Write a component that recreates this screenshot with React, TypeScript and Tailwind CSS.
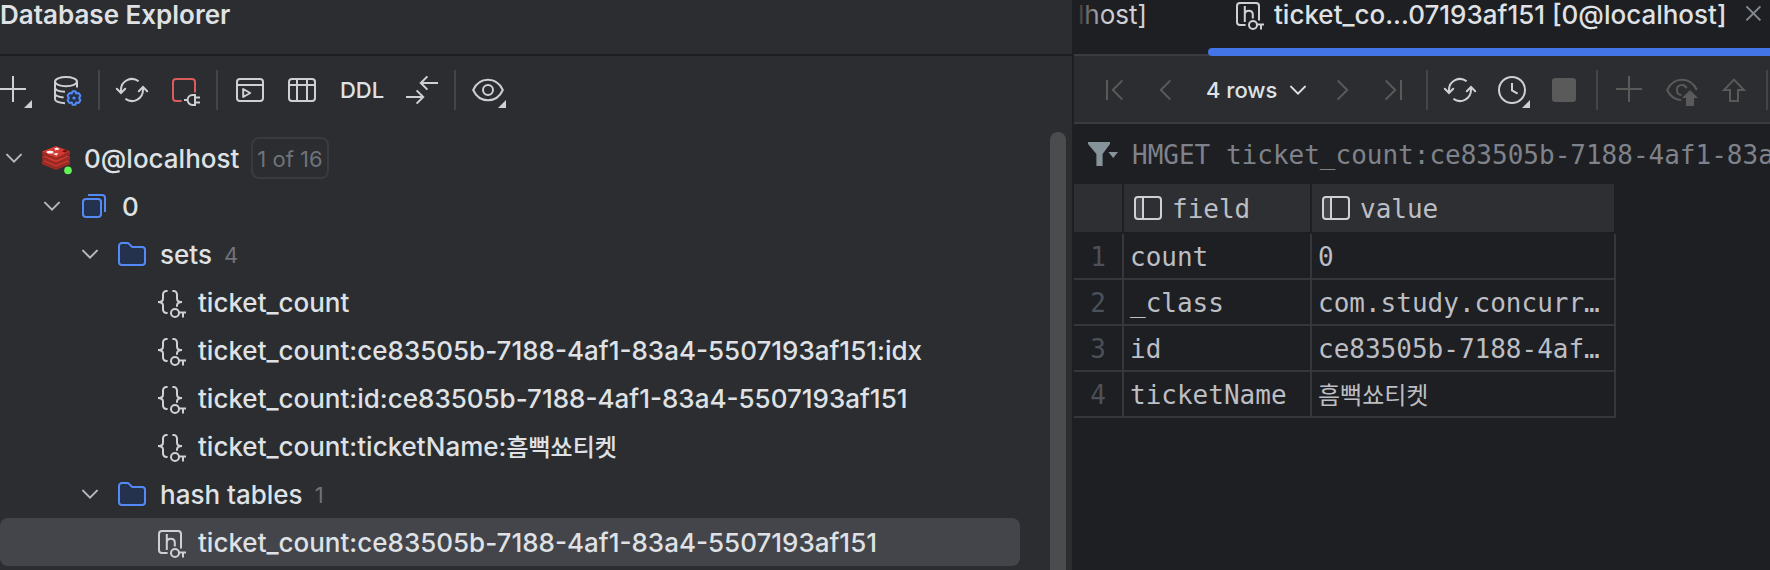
import type { ReactNode } from "react";

const UI_FONT = "font-['Inter','Noto_Sans_CJK_KR',sans-serif]";
const MONO_FONT = "font-['DejaVu_Sans_Mono','Noto_Sans_CJK_KR',monospace]";

function Icon({ children, className = "" }: { children: ReactNode; className?: string }) {
  return (
    <svg
      viewBox="0 0 16 16"
      fill="none"
      stroke="currentColor"
      aria-hidden="true"
      className={`size-8 shrink-0 overflow-visible ${className}`}
    >
      {children}
    </svg>
  );
}

const Corner = () => <path d="M17 13v4h-4z" fill="currentColor" stroke="none" />;

const PlusIcon = ({ menu = false }: { menu?: boolean }) => (
  <Icon>
    <path d="M7.5 1v13M1 7.5h13" />
    {menu && <Corner />}
  </Icon>
);

const DataSourceIcon = () => (
  <Icon>
    <ellipse cx="8" cy="3.8" rx="5.5" ry="2.3" />
    <path d="M2.5 3.8v8.7c0 1 1.8 1.9 5 2.1M2.5 6.7c0 1.1 1.8 2 5 2.2M2.5 9.6c0 1.1 1.6 1.9 4.3 2.1M13.5 3.8v3" />
    <g stroke="#548af7">
      <path
        d="M11.3 8.6h1.4l.4 1.1 1.2-.2.9 1.3-.6 1.2.6 1.2-.9 1.3-1.2-.2-.4 1.1h-1.4l-.4-1.1-1.2.2-.9-1.3.6-1.2-.6-1.2.9-1.3 1.2.2z"
        fill="#25324d"
        strokeLinejoin="round"
      />
      <circle cx="12" cy="12" r="0.8" fill="#548af7" stroke="none" />
    </g>
  </Icon>
);

const RefreshIcon = () => (
  <Icon>
    <path d="M2.5 9.3V8a5.5 5.5 0 0 1 8.8-4.4M13.5 6.7V8a5.5 5.5 0 0 1-8.8 4.4" />
    <path d="M.4 7.4l2.1 2.1 2.1-2.1M11.4 8.6l2.1-2.1 2.1 2.1" strokeLinecap="round" />
  </Icon>
);

const DisconnectIcon = () => (
  <Icon>
    <path
      d="M6.8 13.5H4A1.5 1.5 0 0 1 2.5 12V4A1.5 1.5 0 0 1 4 2.5h8A1.5 1.5 0 0 1 13.5 4v5.2"
      stroke="#db5c5c"
    />
    <path d="M13.5 10.5h-1.2a2.5 2.5 0 0 0 0 5h1.2zM8 13h1.8M13.5 11.7H16M13.5 14.3H16" />
  </Icon>
);

const ConsoleIcon = () => (
  <Icon>
    <rect x="1.5" y="2.5" width="13" height="11" rx="1.5" />
    <path d="M1.5 5.5h13" />
    <path d="M4.6 7.5v4l3.5-2z" strokeLinejoin="round" />
  </Icon>
);

const GridIcon = () => (
  <Icon>
    <rect x="1.5" y="2.5" width="13" height="11" rx="1.5" />
    <path d="M1.5 5.5h13M5.5 2.5v11M10.5 2.5v11" />
  </Icon>
);

const CompareIcon = () => (
  <Icon>
    <path d="M16 4.5H7.4M10.7 1.2L7.4 4.5l3.3 3.3M0 11.5h8.6M5.3 8.2l3.3 3.3-3.3 3.3" />
  </Icon>
);

const EyeIcon = () => (
  <Icon>
    <path d="M.6 8C2 4.9 4.8 2.9 8 2.9S14 4.9 15.4 8C14 11.1 11.2 13.1 8 13.1S2 11.1.6 8z" />
    <circle cx="8" cy="8" r="2.5" />
    <Corner />
  </Icon>
);

const EyeUpIcon = () => (
  <Icon>
    <path d="M15.4 8C14 4.9 11.2 2.9 8 2.9S2 4.9.6 8c1.3 2.9 3.8 4.8 7 5.1" />
    <path d="M7.7 10.5A2.5 2.5 0 1 1 10.3 7.2" />
    <path d="M12 8l4 4h-2v4h-4v-4H8z" fill="currentColor" stroke="none" />
  </Icon>
);

const ClockIcon = () => (
  <Icon>
    <circle cx="8" cy="8" r="6.5" />
    <path d="M8 4.5V8.2l2.8 1.6" />
    <Corner />
  </Icon>
);

const StopIcon = () => (
  <Icon>
    <rect x="2" y="2" width="12" height="12" rx="1.5" fill="currentColor" stroke="none" />
  </Icon>
);

const UploadIcon = () => (
  <Icon>
    <path d="M8 2.8l5 5.2h-3v5.5H6V8H3z" />
  </Icon>
);

const FirstIcon = () => (
  <Icon>
    <path d="M4.5 3v10M12.2 3.2L7.4 8l4.8 4.8" />
  </Icon>
);
const PrevIcon = () => (
  <Icon>
    <path d="M10.2 3.2L5.4 8l4.8 4.8" />
  </Icon>
);
const NextIcon = () => (
  <Icon>
    <path d="M5.8 3.2L10.6 8l-4.8 4.8" />
  </Icon>
);
const LastIcon = () => (
  <Icon>
    <path d="M3.8 3.2L8.6 8l-4.8 4.8M11.5 3v10" />
  </Icon>
);

const ChevronDown = ({ className = "" }: { className?: string }) => (
  <svg
    viewBox="0 0 14 14"
    fill="none"
    stroke="currentColor"
    strokeLinecap="round"
    aria-hidden="true"
    className={`size-7 shrink-0 ${className}`}
  >
    <path d="M3.5 5.3L7 8.8l3.5-3.5" />
  </svg>
);

function RedisLayer({ y }: { y: number }) {
  return (
    <g transform={`translate(0 ${y})`} stroke="none">
      <path d="M1 4.8v1.6l7 2.9 7-2.9V4.8L8 7.7z" fill="#9b2a24" />
      <path d="M1 4.8L8 2l7 2.8-7 2.9z" fill="#d33a31" />
    </g>
  );
}

const RedisIcon = () => (
  <Icon>
    <RedisLayer y={4.7} />
    <RedisLayer y={2.35} />
    <RedisLayer y={0} />
    <g stroke="none" fill="#ffffff">
      <ellipse cx="5" cy="5.1" rx="1.7" ry="0.7" />
      <path d="M7 3l.9.1.4-.5.5.5h1l-.6.4.3.6-1.1-.2-.9.3.1-.6z" />
      <path d="M6.4 5.9l2.7-.4-.8 1.2z" />
    </g>
    <path d="M11 4.6l1.5-.7 1.4.7-1.5.6z" fill="#7a0c00" stroke="none" />
    <circle cx="14" cy="14.2" r="2.3" fill="#2b2d30" stroke="none" />
    <circle cx="14" cy="14.2" r="1.9" fill="#62f354" stroke="none" />
  </Icon>
);

const SchemaIcon = () => (
  <Icon className="text-[#548af7]">
    <rect x="2.5" y="4.5" width="9" height="9" rx="1.5" fill="#25324d" />
    <path d="M5 2.5h7A1.5 1.5 0 0 1 13.5 4v7" />
  </Icon>
);

const FolderIcon = () => (
  <Icon className="text-[#548af7]">
    <path
      d="M1.5 4A1.5 1.5 0 0 1 3 2.5h2.7a1 1 0 0 1 .7.3l1.7 1.7H13A1.5 1.5 0 0 1 14.5 6v6a1.5 1.5 0 0 1-1.5 1.5H3A1.5 1.5 0 0 1 1.5 12z"
      fill="#25324d"
    />
  </Icon>
);

const KeyGlyph = () => (
  <>
    <circle cx="10.5" cy="13.5" r="2" />
    <path d="M12.5 13.2H16M14.5 13.2v2.5" />
  </>
);

const SetIcon = () => (
  <Icon className="text-[#ced0d6]">
    <path d="M6.8 2.5H6.2A1.7 1.7 0 0 0 4.5 4.2v2C4.5 7.3 3.8 8 2 8c1.8 0 2.5.7 2.5 1.8v2a1.7 1.7 0 0 0 1.7 1.7h.6" />
    <path d="M9.2 2.5h.6a1.7 1.7 0 0 1 1.7 1.7v2C11.5 7.3 12.2 8 14 8c-1.8 0-2.5.7-2.5 1.8v.6" />
    <KeyGlyph />
  </Icon>
);

const HashIcon = () => (
  <Icon className="text-[#ced0d6]">
    <path d="M6.8 13.5H4A1.5 1.5 0 0 1 2.5 12V4A1.5 1.5 0 0 1 4 2.5h8A1.5 1.5 0 0 1 13.5 4v7.3" />
    <path d="M6.4 4v8M6.4 8.4c0-1.2.8-2 2-2s2 .8 2 2v1.8" />
    <KeyGlyph />
  </Icon>
);

const ColumnIcon = () => (
  <Icon className="text-[#ced0d6]">
    <rect x="2" y="3" width="3" height="10" fill="#43454a" stroke="none" />
    <rect x="1.5" y="2.5" width="13" height="11" rx="1.5" />
    <path d="M5.5 2.5v11" />
  </Icon>
);

function ToolButton({ label, disabled = false, children }: { label: string; disabled?: boolean; children: ReactNode }) {
  return (
    <button
      type="button"
      aria-label={label}
      disabled={disabled}
      className="flex shrink-0 items-center px-2.5 text-[#ced0d6] disabled:text-[#5a5a5a]"
    >
      {children}
    </button>
  );
}

const Separator = () => <div className="mx-1.5 h-10 w-0.5 shrink-0 bg-[#43454a]" />;

const Korean = ({ children }: { children: ReactNode }) => (
  <span className="font-['Noto_Sans_CJK_KR',sans-serif] text-2xl leading-none">{children}</span>
);

const indents = ["pl-0", "pl-[38px]", "pl-[76px]", "pl-[154px]"];

function TreeRow({
  level,
  icon,
  count,
  selected = false,
  children,
}: {
  level: number;
  icon: ReactNode;
  count?: ReactNode;
  selected?: boolean;
  children: ReactNode;
}) {
  return (
    <li
      role="treeitem"
      aria-selected={selected}
      className={`flex h-12 items-center gap-3 whitespace-nowrap rounded-lg ${indents[level]} ${
        selected ? "bg-[#43454a]" : ""
      }`}
    >
      {level < 3 && <ChevronDown className="text-[#b4b8bf]" />}
      {icon}
      <span className="font-medium">{children}</span>
      {count}
    </li>
  );
}

const Count = ({ children }: { children: ReactNode }) => (
  <span className="pt-0.5 text-[22px] text-[#6f737a]">{children}</span>
);

function DatabaseExplorer() {
  return (
    <aside className="flex min-w-0 flex-col overflow-hidden border-r-2 border-[#1e1f22] bg-[#2b2d30] text-[26px] text-[#dfe1e5]">
      <header className="h-14 border-b-2 border-[#1e1f22]">
        <h1 className="pt-px font-semibold leading-7">Database Explorer</h1>
      </header>
      <div role="toolbar" aria-label="Explorer tools" className="-ml-3 flex h-[68px] items-center">
        <ToolButton label="New">
          <PlusIcon menu />
        </ToolButton>
        <ToolButton label="Data source properties">
          <DataSourceIcon />
        </ToolButton>
        <Separator />
        <ToolButton label="Refresh">
          <RefreshIcon />
        </ToolButton>
        <ToolButton label="Disconnect">
          <DisconnectIcon />
        </ToolButton>
        <Separator />
        <ToolButton label="Query console">
          <ConsoleIcon />
        </ToolButton>
        <ToolButton label="Edit data">
          <GridIcon />
        </ToolButton>
        <button type="button" className="w-[68px] shrink-0 text-[22px] font-medium">
          DDL
        </button>
        <ToolButton label="Compare">
          <CompareIcon />
        </ToolButton>
        <Separator />
        <ToolButton label="View options">
          <EyeIcon />
        </ToolButton>
      </div>
      <div className="flex min-h-0 flex-1">
        <ul role="tree" aria-label="Databases" className="min-w-0 flex-1 pt-2.5">
          <TreeRow
            level={0}
            icon={<RedisIcon />}
            count={
              <span className="rounded-lg border-2 border-[#393b40] px-1 pt-0.5 text-[22px] leading-9 text-[#6f737a]">
                1 of 16
              </span>
            }
          >
            0@localhost
          </TreeRow>
          <TreeRow level={1} icon={<SchemaIcon />}>
            0
          </TreeRow>
          <TreeRow level={2} icon={<FolderIcon />} count={<Count>4</Count>}>
            sets
          </TreeRow>
          <TreeRow level={3} icon={<SetIcon />}>
            ticket_count
          </TreeRow>
          <TreeRow level={3} icon={<SetIcon />}>
            ticket_count:ce83505b-7188-4af1-83a4-5507193af151:idx
          </TreeRow>
          <TreeRow level={3} icon={<SetIcon />}>
            ticket_count:id:ce83505b-7188-4af1-83a4-5507193af151
          </TreeRow>
          <TreeRow level={3} icon={<SetIcon />}>
            ticket_count:ticketName:<Korean>흠뻑쑈티켓</Korean>
          </TreeRow>
          <TreeRow level={2} icon={<FolderIcon />} count={<Count>1</Count>}>
            hash tables
          </TreeRow>
          <TreeRow level={3} icon={<HashIcon />} selected>
            ticket_count:ce83505b-7188-4af1-83a4-5507193af151
          </TreeRow>
        </ul>
        <div className="ml-[30px] mr-1.5 mt-2 w-4 rounded-t-lg bg-[#4b4c4e]" />
      </div>
    </aside>
  );
}

function Tabs() {
  return (
    <div role="tablist" className="flex h-14 border-b-2 border-[#393b40] text-[26px] text-[#dfe1e5]">
      <button
        type="button"
        role="tab"
        aria-selected="false"
        className="relative flex h-7 w-[134px] shrink-0 items-center pl-1 text-[#ced0d6]"
      >
        lhost]
        <span className="absolute inset-y-0 left-0 w-8 bg-linear-to-r from-[#1e1f22] to-transparent" />
      </button>
      <div className="relative -mb-0.5 flex min-w-0 flex-1 items-start">
        <button
          type="button"
          role="tab"
          aria-selected="true"
          className="flex h-7 items-center gap-2.5 whitespace-nowrap pl-6 font-medium"
        >
          <HashIcon />
          ticket_co...07193af151 [0@localhost]
        </button>
        <button type="button" aria-label="Close tab" className="ml-auto flex h-7 shrink-0 items-center text-[#868a91]">
          <Icon>
            <path d="M4.2 4.2l7 7M11.2 4.2l-7 7" />
          </Icon>
        </button>
        <span className="absolute inset-x-0 bottom-0 h-2 rounded-l-full bg-[#4374e8]" />
      </div>
    </div>
  );
}

function GridToolbar() {
  return (
    <div
      role="toolbar"
      aria-label="Result tools"
      className="flex h-[68px] items-center overflow-hidden border-b-2 border-[#393b40] bg-[#2b2d30] pl-3.5 pt-0.5"
    >
      <ToolButton label="First page" disabled>
        <FirstIcon />
      </ToolButton>
      <ToolButton label="Previous page" disabled>
        <PrevIcon />
      </ToolButton>
      <div className="relative flex w-[124px] shrink-0 items-center text-[#dfe1e5]">
        <select
          aria-label="Page size"
          className="w-full appearance-none bg-transparent pl-3.5 text-[22px] font-medium outline-none"
        >
          <option>4 rows</option>
        </select>
        <ChevronDown className="pointer-events-none absolute right-1" />
      </div>
      <ToolButton label="Next page" disabled>
        <NextIcon />
      </ToolButton>
      <ToolButton label="Last page" disabled>
        <LastIcon />
      </ToolButton>
      <Separator />
      <ToolButton label="Reload">
        <RefreshIcon />
      </ToolButton>
      <ToolButton label="History">
        <ClockIcon />
      </ToolButton>
      <ToolButton label="Stop" disabled>
        <StopIcon />
      </ToolButton>
      <Separator />
      <ToolButton label="Add row" disabled>
        <PlusIcon />
      </ToolButton>
      <ToolButton label="Preview changes" disabled>
        <EyeUpIcon />
      </ToolButton>
      <ToolButton label="Submit" disabled>
        <UploadIcon />
      </ToolButton>
      <Separator />
    </div>
  );
}

const rows: { field: string; value: ReactNode }[] = [
  { field: "count", value: "0" },
  { field: "_class", value: "com.study.concurr…" },
  { field: "id", value: "ce83505b-7188-4af…" },
  { field: "ticketName", value: <Korean>흠뻑쑈티켓</Korean> },
];

function ResultGrid() {
  return (
    <table
      className={`w-[542px] table-fixed border-separate border-spacing-0 text-left text-[26px] leading-8 text-[#bcbec4] ${MONO_FONT}`}
    >
      <colgroup>
        <col className="w-[50px]" />
        <col className="w-[188px]" />
        <col className="w-[304px]" />
      </colgroup>
      <thead>
        <tr>
          <th aria-label="Row" className="h-[50px] border-b-2 border-r-2 border-[#1e1f22] bg-[#2e2f32] p-0" />
          {["field", "value"].map((name) => (
            <th
              key={name}
              scope="col"
              className="h-[50px] border-b-2 border-r-2 border-[#1e1f22] bg-[#2e2f32] p-0 pl-2 font-normal"
            >
              <span className="flex items-center gap-2">
                <ColumnIcon />
                <span className="pt-0.5">{name}</span>
              </span>
            </th>
          ))}
        </tr>
      </thead>
      <tbody>
        {rows.map((row, index) => (
          <tr key={row.field}>
            <td className="h-[46px] border-b-2 border-r-2 border-[#36373b] p-0 pt-0.5 text-center text-[#4b5059]">
              {index + 1}
            </td>
            <td className="h-[46px] border-b-2 border-r-2 border-[#36373b] p-0 pl-1.5 pt-0.5">{row.field}</td>
            <td className="h-[46px] whitespace-nowrap border-b-2 border-r-2 border-[#36373b] p-0 pl-1.5 pt-0.5">
              {row.value}
            </td>
          </tr>
        ))}
      </tbody>
    </table>
  );
}

function Editor() {
  return (
    <main className="flex min-w-0 flex-col overflow-hidden bg-[#1e1f22]">
      <Tabs />
      <GridToolbar />
      <div className="flex h-[60px] items-center pl-3">
        <button type="button" aria-label="Filter" className="flex shrink-0 items-center text-[#87939a]">
          <Icon>
            <path d="M1 2h11v1L8.3 8v6H5.2V8L1 3z" fill="currentColor" stroke="none" />
            <path d="M11.2 7h4.8l-2.4 3z" fill="currentColor" stroke="none" />
          </Icon>
        </button>
        <input
          type="text"
          aria-label="Query"
          defaultValue="HMGET ticket_count:ce83505b-7188-4af1-83a"
          className={`ml-3.5 min-w-0 flex-1 bg-transparent pt-0.5 text-[26px] leading-8 text-[#7f828a] outline-none ${MONO_FONT}`}
        />
      </div>
      <ResultGrid />
    </main>
  );
}

export default function App() {
  return (
    <div
      className={`grid h-screen grid-cols-[minmax(0,1074fr)_minmax(0,696fr)] overflow-hidden bg-[#1e1f22] ${UI_FONT}`}
    >
      <DatabaseExplorer />
      <Editor />
    </div>
  );
}
